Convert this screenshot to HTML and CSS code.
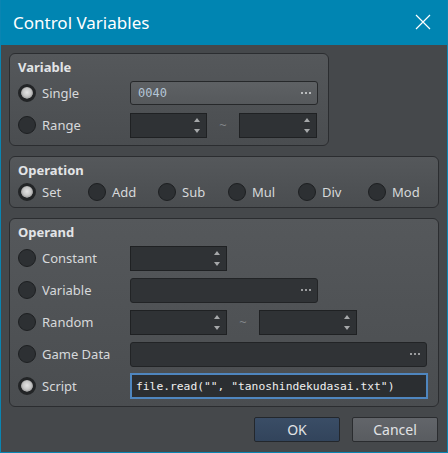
FILE: index.html
```html
<!DOCTYPE html>
<html lang="en">
<head>
  <meta charset="UTF-8" />
  <title>Control Variables</title>
  <link rel="stylesheet" href="styles.css">
</head>
<body>
  <div class="dialog">
    <div class="titlebar">
      <span class="title">Control Variables</span>
      <svg class="close" width="16" height="16" viewBox="0 0 16 16">
        <path d="M1 1 L15 15 M15 1 L1 15" stroke="#ffffff" stroke-width="1.2" fill="none"/>
      </svg>
    </div>

    <div class="content">
      <!-- Variable -->
      <section class="group group-var">
        <h2 class="group-title">Variable</h2>
        <div class="row">
          <label class="opt"><span class="radio checked"></span>Single</label>
          <div class="field picker w188"><span class="value">0040</span><span class="dots"><i></i><i></i><i></i></span></div>
        </div>
        <div class="row">
          <label class="opt"><span class="radio"></span>Range</label>
          <div class="spin w77"><span class="arrows"><i class="up"></i><i class="down"></i></span></div>
          <span class="tilde">~</span>
          <div class="spin w78"><span class="arrows"><i class="up"></i><i class="down"></i></span></div>
        </div>
      </section>

      <!-- Operation -->
      <section class="group group-op">
        <h2 class="group-title">Operation</h2>
        <div class="row row-op">
          <label class="opt opt-op"><span class="radio checked"></span>Set</label>
          <label class="opt opt-op"><span class="radio"></span>Add</label>
          <label class="opt opt-op"><span class="radio"></span>Sub</label>
          <label class="opt opt-op"><span class="radio"></span>Mul</label>
          <label class="opt opt-op"><span class="radio"></span>Div</label>
          <label class="opt opt-op"><span class="radio"></span>Mod</label>
        </div>
      </section>

      <!-- Operand -->
      <section class="group group-operand">
        <h2 class="group-title">Operand</h2>
        <div class="row">
          <label class="opt"><span class="radio"></span>Constant</label>
          <div class="spin w97"><span class="arrows"><i class="up"></i><i class="down"></i></span></div>
        </div>
        <div class="row">
          <label class="opt"><span class="radio"></span>Variable</label>
          <div class="field picker off w188"><span class="value"></span><span class="dots"><i></i><i></i><i></i></span></div>
        </div>
        <div class="row">
          <label class="opt"><span class="radio"></span>Random</label>
          <div class="spin w97"><span class="arrows"><i class="up"></i><i class="down"></i></span></div>
          <span class="tilde">~</span>
          <div class="spin w98"><span class="arrows"><i class="up"></i><i class="down"></i></span></div>
        </div>
        <div class="row">
          <label class="opt"><span class="radio"></span>Game Data</label>
          <div class="field picker off w297"><span class="value"></span><span class="dots"><i></i><i></i><i></i></span></div>
        </div>
        <div class="row">
          <label class="opt"><span class="radio checked"></span>Script</label>
          <input class="script w298" type="text" value='file.read("", "tanoshindekudasai.txt")'>
        </div>
      </section>

      <div class="buttons">
        <button class="btn btn-ok">OK</button>
        <button class="btn">Cancel</button>
      </div>
    </div>
  </div>
</body>
</html>
```

FILE: styles.css
```css
body {
  margin: 0;
  padding: 0;
  font-family: 'Noto Sans', 'Open Sans', sans-serif;
  background-color: #45484b;
}

.dialog {
  width: 448px;
  height: 453px;
  box-sizing: border-box;
  border: 1px solid #0a85b2;
  border-top: none;
  background-color: #45484b;
  display: flex;
  flex-direction: column;
}

.titlebar {
  height: 45px;
  background-color: #0085b2;
  display: flex;
  align-items: center;
  justify-content: space-between;
  padding: 0 16px 0 12px;
  flex-shrink: 0;
}

.title {
  color: #ffffff;
  font-size: 17px;
  margin-top: -1px;
}

.close {
  display: block;
  margin-top: -1px;
}

.content {
  padding: 8px 8px 0 8px;
  display: flex;
  flex-direction: column;
  gap: 10px;
}

.group {
  border: 1px solid #2b2d30;
  border-radius: 6px;
  background: linear-gradient(#55585b, #4a4d50);
  padding: 3px 8px 4px 8px;
}

.group-var {
  width: 302px;
}

.group-op {
  padding-bottom: 3px;
}

.group-title {
  margin: 0;
  height: 20px;
  line-height: 20px;
  font-size: 13px;
  font-weight: bold;
  color: #e2e4e6;
}

.row {
  height: 32px;
  display: flex;
  align-items: center;
}

.row-op {
  height: 24px;
}

.opt {
  width: 112px;
  flex-shrink: 0;
  display: flex;
  align-items: center;
  gap: 6px;
  font-size: 13px;
  color: #d7d9db;
}

.opt-op {
  width: 70px;
}

.radio {
  width: 18px;
  height: 18px;
  box-sizing: border-box;
  border-radius: 50%;
  border: 1px solid #1d1f21;
  background-color: #2d3033;
  flex-shrink: 0;
}

.radio.checked {
  border: 3px solid #222426;
  background: radial-gradient(circle at 50% 45%, #e4e4e4 0, #c6c6c6 4px, #a0a0a0 6px, #222426 6.5px);
}

.field {
  height: 24px;
  box-sizing: border-box;
  border: 1px solid #26282a;
  border-radius: 3px;
  display: flex;
  align-items: center;
  justify-content: space-between;
  padding: 0 6px 0 7px;
}

.picker {
  background: linear-gradient(#5e6164, #56595c);
}

.picker.off {
  background: #303336;
  border-color: #222426;
  height: 25px;
}

.value {
  font-family: 'DejaVu Sans Mono', monospace;
  font-size: 12px;
  color: #b4c5d6;
}

.dots {
  display: flex;
  gap: 2px;
}

.dots i {
  width: 2px;
  height: 2px;
  background-color: #b9bbbd;
}

.off .dots i {
  background-color: #9a9c9e;
}

.spin {
  height: 25px;
  box-sizing: border-box;
  border: 1px solid #1f2123;
  background-color: #2f3235;
  display: flex;
  justify-content: flex-end;
  align-items: center;
  padding-right: 6px;
}

.arrows {
  display: flex;
  flex-direction: column;
  gap: 7px;
}

.arrows i {
  width: 0;
  height: 0;
  border-left: 3.5px solid transparent;
  border-right: 3.5px solid transparent;
}

.arrows .up {
  border-bottom: 4px solid #a6a8aa;
}

.arrows .down {
  border-top: 4px solid #a6a8aa;
}

.w77 { width: 77px; }
.w78 { width: 78px; }
.w97 { width: 97px; }
.w98 { width: 98px; }
.w188 { width: 188px; }
.w297 { width: 297px; }
.w298 { width: 298px; }

.tilde {
  width: 32px;
  text-align: center;
  font-size: 13px;
  color: #83868a;
}

.script {
  height: 26px;
  box-sizing: border-box;
  border: 2px solid #4f86bf;
  background-color: #2b2e31;
  color: #f0f0f0;
  font-family: 'DejaVu Sans Mono', monospace;
  font-size: 11.3px;
  padding: 0 4px;
  outline: none;
  margin: 0;
}

.buttons {
  display: flex;
  justify-content: flex-end;
  gap: 12px;
  padding-right: 1px;
}

.btn {
  width: 86px;
  height: 25px;
  box-sizing: border-box;
  border: 1px solid #2a2c2f;
  border-radius: 2px;
  background: linear-gradient(#62656a, #595c60);
  color: #e1e3e5;
  font-family: 'Noto Sans', sans-serif;
  font-size: 14px;
  padding: 0;
}

.btn-ok {
  background: linear-gradient(#3a4d66, #32445b);
  border-color: #23272c;
}
```
